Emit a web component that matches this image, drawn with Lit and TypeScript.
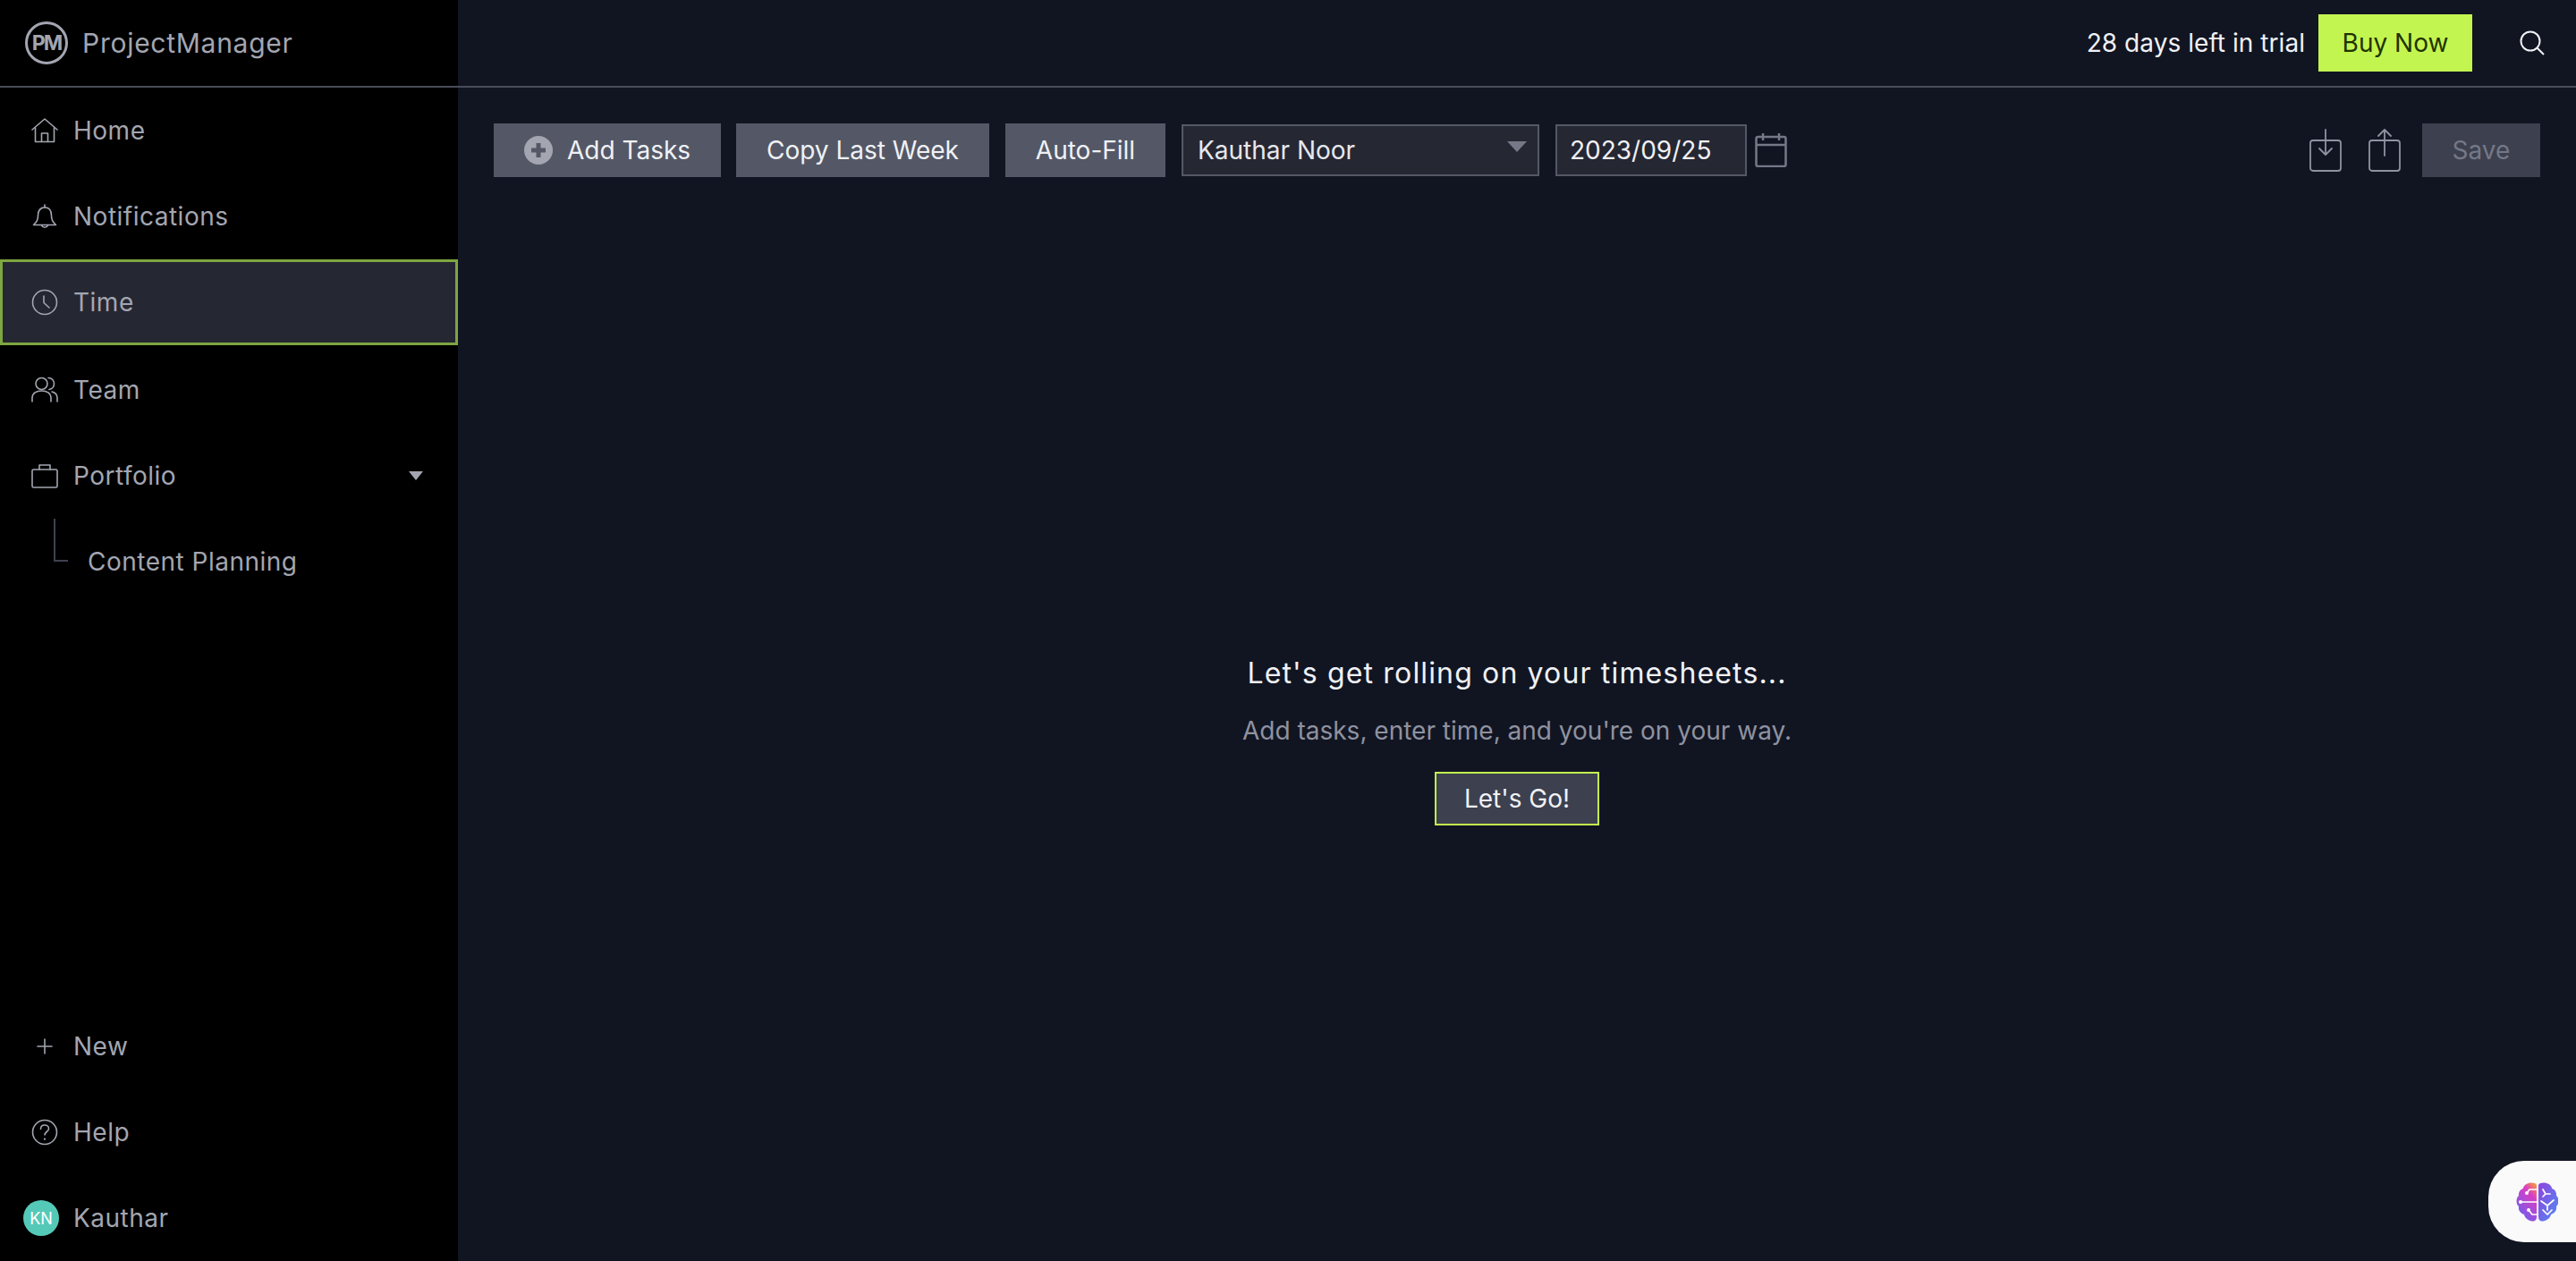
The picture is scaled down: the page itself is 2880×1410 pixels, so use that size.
import { LitElement, html, css, svg } from "lit";
import { customElement } from "lit/decorators.js";

const ic = (body: unknown, w = 32, h = 32, vb = "0 0 32 32") => html`<svg class="ic" width=${w} height=${h} viewBox=${vb} fill="none" stroke="currentColor" stroke-width="1.6" stroke-linecap="round" stroke-linejoin="round">${body}</svg>`;

const icons = {
  home: svg`<path d="M2 15 L16 3 L30 15"/><path d="M5.5 13 V28.5 H26.5 V13"/><path d="M12.5 28.5 V19 H19.5 V28.5"/>`,
  bell: svg`<path d="M16 6 C10 6 8.5 11 8.5 15 C8.5 20 7 22 3.5 25.5 H28.5 C25 22 23.500 20 23.500 15 C23.500 11 22 6 16 6 Z"/><path d="M16 3 V6"/><path d="M12.500 26 A3.800 3.800 0 0 0 19.500 26"/>`,
  clock: svg`<circle cx="16" cy="16" r="13.500"/><path d="M15 9 V16.500 L21 22"/>`,
  team: svg`<circle cx="12.500" cy="9" r="6.500"/><path d="M2 29 V25 C2 19.500 7 17 12.500 17 C18 17 23 19.500 23 25 V29"/><path d="M20 2.500 C24 2.500 26.500 5.500 26.500 9 C26.500 12.500 24 15 21 15.500"/><path d="M24 18 C28 19 30 22 30 25 V29"/>`,
  brief: svg`<rect x="2" y="9" width="28" height="20" rx="1.500"/><path d="M10 9 V4 H22 V9"/>`,
  help: svg`<circle cx="16" cy="16" r="13.500"/><path d="M11.500 12.500 C11.500 9.500 13.500 8 16 8 C18.500 8 20.500 9.800 20.500 12 C20.500 15.500 16 15.500 16 19"/><path d="M16 23.500 V23.700" stroke-width="2.200"/>`,
  plus: svg`<path d="M16 8 V24 M8 16 H24"/>`,
};

@customElement("nav-row")
class NavRow extends LitElement {
  static properties = { active: { type: Boolean, reflect: true } };
  static styles = css`
    :host { display: flex; align-items: center; height: 96px; box-sizing: border-box; padding-left: 34px; gap: 16px; color: #a3a6b1; font-size: 28px; letter-spacing: 0.5px; flex: none; }
    :host([active]) { background: #252733; border: 3px solid #7ea641; padding-left: 31px; margin-bottom: 2px; }
    ::slotted(svg) { flex: none; }
  `;
  render() { return html`<slot></slot>`; }
}

@customElement("app-root")
class AppRoot extends LitElement {
  static styles = css`
    :host { display: flex; width: 2880px; height: 1410px; background: #111522; font-family: Inter, "Noto Sans", sans-serif; overflow: hidden; position: relative; }
    .side { width: 512px; flex: none; background: #000; display: flex; flex-direction: column; height: 100%; }
    .brand { height: 98px; flex: none; box-sizing: border-box; border-bottom: 2px solid #4a4d59; display: flex; align-items: center; padding-left: 28px; gap: 16px; color: #a3a6b1; font-size: 30px; letter-spacing: 0.73px; }
    .pm { width: 48px; height: 48px; box-sizing: border-box; border: 3px solid #a3a6b1; border-radius: 50%; display: flex; align-items: center; justify-content: center; font-size: 23px; font-weight: 700; letter-spacing: -1.8px; }
    .ic { flex: none; }
    .grow { flex: 1; }
    .caret { margin-left: auto; margin-right: 39px; width: 0; height: 0; border-left: 8px solid transparent; border-right: 8px solid transparent; border-top: 10px solid #a3a6b1; }
    .sub { height: 95px; flex: none; display: flex; align-items: center; padding-left: 60px; color: #a3a6b1; font-size: 28px; letter-spacing: 0.5px; position: relative; }
    .elbow { position: absolute; left: 60px; top: 0; width: 16px; height: 48px; border-left: 2px solid #3f4250; border-bottom: 2px solid #3f4250; box-sizing: border-box; }
    .sub span { margin-left: 38px; }
    .avatar { width: 40px; height: 40px; border-radius: 50%; background: #55c9b8; color: #fff; font-size: 18px; display: flex; align-items: center; justify-content: center; margin-left: -8px; letter-spacing: 0; flex: none; }
    .bottom { display: flex; flex-direction: column; }
    .main { flex: 1; display: flex; flex-direction: column; min-width: 0; }
    .top { height: 98px; flex: none; box-sizing: border-box; border-bottom: 2px solid #4a4d59; display: flex; align-items: center; justify-content: flex-end; color: #f0f1f5; font-size: 28px; padding-right: 35px; }
    .trial { letter-spacing: 0.05px; }
    .buy { background: #c3f550; color: #1f3300; height: 64px; width: 172px; margin-left: 15px; margin-right: 53px; display: flex; align-items: center; justify-content: center; font-size: 28px; }
    .search { color: #f0f1f5; }
    .bar { display: flex; align-items: center; padding: 40px 40px 0 40px; gap: 18px; height: 60px; flex: none; }
    .btn { height: 60px; background: #545866; color: #f0f1f5; font-size: 28px; display: flex; align-items: center; justify-content: center; box-sizing: border-box; flex: none; }
    .add { width: 254px; gap: 16px; margin-right: -1px; }
    .copy { width: 283px; }
    .auto { width: 179px; }
    .field { height: 58px; background: #252733; border: 2px solid #545866; box-sizing: border-box; color: #f0f1f5; font-size: 28px; display: flex; align-items: center; padding-left: 17px; flex: none; }
    .sel { width: 400px; position: relative; color: #e6e7ec; padding-left: 16px; }
    .sel i { position: absolute; right: 12px; top: 17px; width: 0; height: 0; border-left: 11px solid transparent; border-right: 11px solid transparent; border-top: 12px solid #757887; }
    .date { width: 214px; padding-left: 14px; }
    .cal { color: #757887; margin-left: -9px; }
    .right { margin-left: auto; display: flex; align-items: center; color: #8f92a0; }
    .save { width: 132px; background: #3d404e; color: #757887; margin-left: 24px; }
    .tool + .tool { margin-left: 30px; }
    .empty { flex: 1; display: flex; flex-direction: column; align-items: center; padding-top: 531px; box-sizing: border-box; }
    h2 { margin: 0; font-weight: 400; font-size: 32px; color: #f0f1f5; letter-spacing: 1.15px; line-height: 48px; }
    p { margin: 17px 0 0; font-size: 28px; color: #8f92a0; line-height: 46px; }
    .go { margin-top: 23px; width: 184px; background: #3d404e; border: 2px solid #c3f550; }
    .float { position: absolute; right: 0; top: 1298px; width: 98px; height: 91px; background: #fafafb; border-radius: 40px 0 0 40px; display: flex; align-items: center; padding-left: 30px; box-sizing: border-box; }
  `;
  render() {
    return html`
      <aside class="side">
        <div class="brand"><div class="pm">PM</div><span>ProjectManager</span></div>
        <nav-row>${ic(icons.home)}<span>Home</span></nav-row>
        <nav-row>${ic(icons.bell)}<span>Notifications</span></nav-row>
        <nav-row active>${ic(icons.clock)}<span>Time</span></nav-row>
        <nav-row>${ic(icons.team)}<span>Team</span></nav-row>
        <nav-row>${ic(icons.brief)}<span>Portfolio</span><div class="caret"></div></nav-row>
        <div class="sub"><div class="elbow"></div><span>Content Planning</span></div>
        <div class="grow"></div>
        <div class="bottom">
          <nav-row>${ic(icons.plus)}<span>New</span></nav-row>
          <nav-row>${ic(icons.help)}<span>Help</span></nav-row>
          <nav-row><div class="avatar">KN</div><span>Kauthar</span></nav-row>
        </div>
      </aside>
      <main class="main">
        <header class="top">
          <span class="trial">28 days left in trial</span>
          <div class="buy">Buy Now</div>
          <svg class="search" width="28" height="28" viewBox="0 0 28 28" fill="none" stroke="currentColor" stroke-width="2"><circle cx="12" cy="12" r="10.500"/><path d="M19.500 19.500 L27 27"/></svg>
        </header>
        <div class="bar">
          <div class="btn add">
            <svg width="32" height="32" viewBox="0 0 32 32"><circle cx="16" cy="16" r="16" fill="#a3a6b1"/><path d="M16 8 V24 M8 16 H24" stroke="#545866" stroke-width="5"/></svg>
            <span>Add Tasks</span>
          </div>
          <div class="btn copy">Copy Last Week</div>
          <div class="btn auto">Auto-Fill</div>
          <div class="field sel">Kauthar Noor<i></i></div>
          <div class="field date">2023/09/25</div>
          <svg class="cal" width="36" height="38" viewBox="0 0 36 38" fill="none" stroke="currentColor" stroke-width="2.500" stroke-linejoin="round"><rect x="1.500" y="4" width="33" height="33" rx="2"/><path d="M1.500 13 H34.500 M9 0 V8 M27 0 V8"/></svg>
          <div class="right">
            <svg class="tool" width="36" height="48" viewBox="0 0 36 48" fill="none" stroke="currentColor" stroke-width="1.800" stroke-linejoin="round" stroke-linecap="round"><rect x="1" y="13" width="34" height="34" rx="3"/><path d="M18 1 V29 M11 22 L18 29 L25 22"/></svg>
            <svg class="tool" width="36" height="48" viewBox="0 0 36 48" fill="none" stroke="currentColor" stroke-width="1.800" stroke-linejoin="round" stroke-linecap="round"><rect x="1" y="13" width="34" height="34" rx="3"/><path d="M18 30 V1 M11 8 L18 1 L25 8"/></svg>
            <div class="btn save">Save</div>
          </div>
        </div>
        <section class="empty">
          <h2>Let's get rolling on your timesheets...</h2>
          <p>Add tasks, enter time, and you're on your way.</p>
          <div class="btn go">Let's Go!</div>
        </section>
      </main>
      <div class="float">
        <svg width="48" height="44" viewBox="0 0 48 44" fill="none">
          <defs>
            <linearGradient id="g1" x1="0.9" y1="0" x2="0.3" y2="1"><stop offset="0" stop-color="#f59a3c"/><stop offset="0.3" stop-color="#d93ec4"/><stop offset="1" stop-color="#6a5ef0"/></linearGradient>
            <linearGradient id="g2" x1="0" y1="0" x2="1" y2="1"><stop offset="0" stop-color="#8f45dc"/><stop offset="1" stop-color="#4f8cf5"/></linearGradient>
          </defs>
          <path d="M24 3 C23 0.5 18 0 15 1 C11 2 9 5 9 7 C5 8 3.500 12 4 15 C1 17 0.500 24 4 27 C3 32 7 35 10 36 C11 41 17 44 21 43.500 C23 43 24 41 24 39 Z" fill="url(#g1)"/>
          <path d="M26 3 C27 0.500 32 0 35 1 C39 2 41 5 41 7 C45 8 46.500 12 46 15 C49 17 49.500 24 46 27 C47 32 43 35 40 36 C39 41 33 44 29 43.500 C27 43 26 41 26 39 Z" fill="url(#g2)"/>
          <g stroke="#fff" stroke-width="1.700" stroke-linecap="round" stroke-linejoin="round">
            <path d="M24 8 H16 L13 12 M6 22 H24 M24 36 H19 L15 31"/>
            <path d="M31 8 L34 13 L31 16 M34 13 H39 M29 21 L36 26 L43 20 M36 26 V31 M31 31 L36 36 M41 31 L36 36"/>
          </g>
          <g fill="#fff"><circle cx="13" cy="12" r="2"/><circle cx="6" cy="22" r="2"/><circle cx="15" cy="31" r="2"/></g>
        </svg>
      </div>
    `;
  }
}
